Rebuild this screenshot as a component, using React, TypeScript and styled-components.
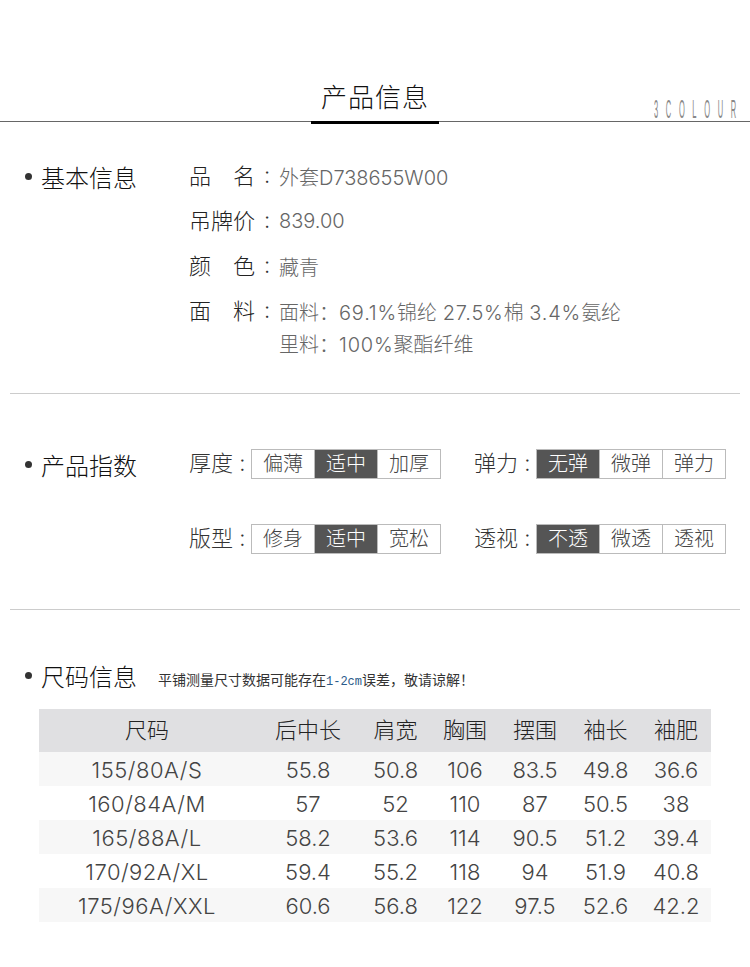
import React from 'react';
import styled, { createGlobalStyle } from 'styled-components';

const FONT = `Inter, "Noto Sans CJK SC", sans-serif`;

const GlobalStyle = createGlobalStyle`
  html, body {
    margin: 0;
    padding: 0;
    background: #fff;
    font-family: ${FONT};
    font-weight: 300;
  }
`;

const Page = styled.div`
  width: 750px;
  height: 967px;
  overflow: hidden;
`;

const Header = styled.header`
  position: relative;
  height: 122px;
  box-sizing: border-box;
  padding-top: 80px;
  border-bottom: 1px solid #666;
  text-align: center;
`;

const Title = styled.h1`
  position: relative;
  display: inline-block;
  width: 128px;
  height: 42px;
  margin: 0;
  font-size: 26px;
  line-height: 36px;
  font-weight: 300;
  letter-spacing: 1px;
  color: #111;

  &::after {
    content: '';
    position: absolute;
    left: 0;
    right: 0;
    bottom: -2px;
    height: 3px;
    background: #000;
  }
`;

const Brand = styled.span`
  position: absolute;
  left: 654px;
  top: 95px;
  font-family: "Liberation Sans", sans-serif;
  font-size: 25px;
  font-weight: 400;
  line-height: 28px;
  letter-spacing: 25.5px;
  color: #888;
  white-space: nowrap;
  transform: scaleX(0.3);
  transform-origin: left center;
`;

const Section = styled.section<{ $height: number; $top: number }>`
  display: flex;
  height: ${(p) => p.$height}px;
  box-sizing: border-box;
  padding: ${(p) => p.$top}px 0 0 25px;
`;

const Heading = styled.h2<{ $width: number }>`
  display: flex;
  align-items: center;
  width: ${(p) => p.$width}px;
  height: 34px;
  margin: 0;
  font-size: 24px;
  font-weight: 300;
  color: #111;
  flex: none;

  &::before {
    content: '';
    width: 7px;
    height: 7px;
    margin-right: 9px;
    border-radius: 50%;
    background: #333;
  }
`;

const Details = styled.div`
  display: flex;
  flex-direction: column;
  margin-top: 2px;
`;

const DetailRow = styled.div<{ $height: number }>`
  display: flex;
  align-items: center;
  height: ${(p) => p.$height}px;
`;

const DetailLabel = styled.span`
  display: flex;
  justify-content: space-between;
  width: 66px;
  margin-bottom: 4px;
  font-size: 22px;
  color: #222;
`;

const Colon = styled.span`
  width: 24px;
  margin-bottom: 2px;
  font-size: 22px;
  color: #333;
  text-align: center;
`;

const DetailValue = styled.span<{ $indent?: boolean }>`
  margin-left: ${(p) => (p.$indent ? 90 : 0)}px;
  font-size: 20px;
  color: #666;
  white-space: nowrap;
`;

const Num = styled.span`
  letter-spacing: 0.8px;
`;

const Divider = styled.hr`
  height: 1px;
  margin: 0 10px;
  border: 0;
  background: #ccc;
`;

const MetricGrid = styled.div`
  display: grid;
  grid-template-columns: 252px 252px;
  column-gap: 33px;
  row-gap: 45px;
  align-self: flex-start;
  margin-top: 2px;
`;

const Metric = styled.div`
  display: flex;
  align-items: center;
  height: 30px;
`;

const MetricLabel = styled.span`
  width: 62px;
  margin-bottom: 6px;
  font-size: 22px;
  color: #333;
  white-space: nowrap;
`;

const Scale = styled.div`
  display: flex;
  box-sizing: border-box;
  width: 190px;
  height: 30px;
  border: 1px solid #bbb;
`;

const ScaleCell = styled.span<{ $active?: boolean }>`
  flex: 1;
  font-size: 20px;
  line-height: 29px;
  text-align: center;
  color: ${(p) => (p.$active ? '#fff' : '#444')};
  background: ${(p) => (p.$active ? '#555' : 'transparent')};

  & + & {
    border-left: 1px solid #bbb;
  }
`;

const SizeHeader = styled.div`
  display: flex;
  align-items: center;
  height: 34px;
  padding: 48px 0 17px 25px;
`;

const Note = styled.span`
  margin: 8px 0 0 16px;
  font-size: 14px;
  font-weight: 400;
  color: #333;
  white-space: nowrap;
`;

const NoteCode = styled.span`
  font-family: "Liberation Mono", monospace;
  font-size: 12px;
  color: #2a5a8a;
`;

const Table = styled.table`
  width: 672px;
  margin-left: 39px;
  border-collapse: collapse;
  table-layout: fixed;
  font-size: 22px;
  color: #444;
`;

const HeadCell = styled.th`
  height: 43px;
  padding: 0 0 5px;
  box-sizing: border-box;
  font-weight: 300;
  color: #222;
  background: #e0e0e2;
`;

const BodyRow = styled.tr`
  &:nth-child(odd) {
    background: #f7f7f7;
  }
`;

const BodyCell = styled.td`
  height: 34px;
  padding: 2px 0 0;
  box-sizing: border-box;
  text-align: center;

  &:first-child {
    letter-spacing: 0.5px;
  }
`;

const metrics = [
  { label: '厚度', options: ['偏薄', '适中', '加厚'], active: 1 },
  { label: '弹力', options: ['无弹', '微弹', '弹力'], active: 0 },
  { label: '版型', options: ['修身', '适中', '宽松'], active: 1 },
  { label: '透视', options: ['不透', '微透', '透视'], active: 0 },
];

const columns = [
  { title: '尺码', width: 216 },
  { title: '后中长', width: 106 },
  { title: '肩宽', width: 69 },
  { title: '胸围', width: 70 },
  { title: '摆围', width: 70 },
  { title: '袖长', width: 71 },
  { title: '袖肥', width: 70 },
];

const sizes = [
  ['155/80A/S', '55.8', '50.8', '106', '83.5', '49.8', '36.6'],
  ['160/84A/M', '57', '52', '110', '87', '50.5', '38'],
  ['165/88A/L', '58.2', '53.6', '114', '90.5', '51.2', '39.4'],
  ['170/92A/XL', '59.4', '55.2', '118', '94', '51.9', '40.8'],
  ['175/96A/XXL', '60.6', '56.8', '122', '97.5', '52.6', '42.2'],
];

export default function App() {
  return (
    <Page>
      <GlobalStyle />
      <Header>
        <Title>产品信息</Title>
        <Brand>3COLOUR</Brand>
      </Header>

      <Section $height={271} $top={37}>
        <Heading $width={164}>基本信息</Heading>
        <Details>
          <DetailRow $height={30}>
            <DetailLabel><span>品</span><span>名</span></DetailLabel>
            <Colon>:</Colon>
            <DetailValue>外套D738655W00</DetailValue>
          </DetailRow>
          <DetailRow $height={60}>
            <DetailLabel>吊牌价</DetailLabel>
            <Colon>:</Colon>
            <DetailValue>839.00</DetailValue>
          </DetailRow>
          <DetailRow $height={30}>
            <DetailLabel><span>颜</span><span>色</span></DetailLabel>
            <Colon>:</Colon>
            <DetailValue>藏青</DetailValue>
          </DetailRow>
          <DetailRow $height={60}>
            <DetailLabel><span>面</span><span>料</span></DetailLabel>
            <Colon>:</Colon>
            <DetailValue>面料：<Num>69.1%</Num>锦纶 <Num>27.5%</Num>棉 <Num>3.4%</Num>氨纶</DetailValue>
          </DetailRow>
          <DetailRow $height={4}>
            <DetailValue $indent>里料：<Num>100%</Num>聚酯纤维</DetailValue>
          </DetailRow>
        </Details>
      </Section>
      <Divider />

      <Section $height={215} $top={53}>
        <Heading $width={164}>产品指数</Heading>
        <MetricGrid>
          {metrics.map((metric) => (
            <Metric key={metric.label}>
              <MetricLabel>{metric.label} :</MetricLabel>
              <Scale>
                {metric.options.map((option, i) => (
                  <ScaleCell key={option} $active={i === metric.active}>{option}</ScaleCell>
                ))}
              </Scale>
            </Metric>
          ))}
        </MetricGrid>
      </Section>
      <Divider />

      <SizeHeader>
        <Heading $width={117}>尺码信息</Heading>
        <Note>平铺测量尺寸数据可能存在<NoteCode>1-2cm</NoteCode>误差，敬请谅解！</Note>
      </SizeHeader>

      <Table>
        <colgroup>
          {columns.map((column) => (
            <col key={column.title} width={column.width} />
          ))}
        </colgroup>
        <thead>
          <tr>
            {columns.map((column) => (
              <HeadCell key={column.title}>{column.title}</HeadCell>
            ))}
          </tr>
        </thead>
        <tbody>
          {sizes.map((row) => (
            <BodyRow key={row[0]}>
              {row.map((cell, i) => (
                <BodyCell key={i}>{cell}</BodyCell>
              ))}
            </BodyRow>
          ))}
        </tbody>
      </Table>
    </Page>
  );
}
